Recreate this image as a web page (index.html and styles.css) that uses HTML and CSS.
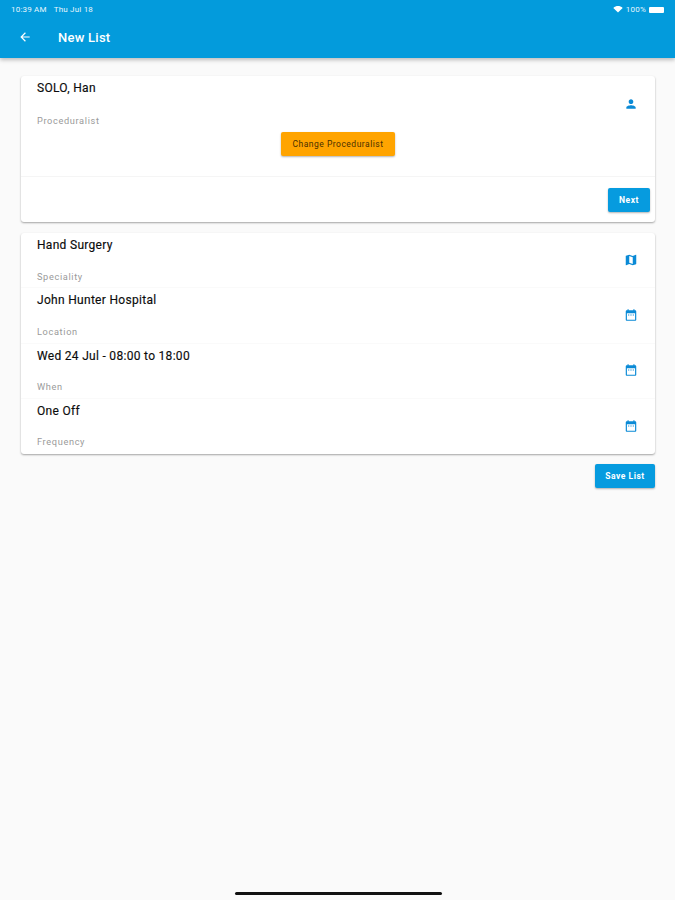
FILE: index.html
```html
<!DOCTYPE html>
<html lang="en">
<head>
    <meta charset="UTF-8">
    <title>New List</title>
    <link rel="stylesheet" href="styles.css">
</head>
<body>
    <header class="app-bar">
        <div class="status-bar">
            <span class="status-left"><span>10:39 AM</span><span>Thu Jul 18</span></span>
            <span class="status-right">
                <svg class="wifi" viewBox="0 0 24 18"><path d="M12 17 0 5c7-6.500 17-6.500 24 0z"/></svg>
                <span>100%</span>
                <span class="battery"></span>
            </span>
        </div>
        <div class="toolbar">
            <svg class="back" viewBox="0 0 24 24"><path d="M20 11H7.800l5.600-5.600L12 4l-8 8 8 8 1.400-1.400L7.800 13H20z"/></svg>
            <span class="toolbar-title">New List</span>
        </div>
    </header>

    <main class="content">
        <section class="card">
            <div class="row row-first">
                <div class="row-text">
                    <div class="value">SOLO, Han</div>
                    <div class="label label-first">Proceduralist</div>
                </div>
                <svg class="icon" viewBox="0 0 24 24"><path d="M12 12c2.200 0 4-1.800 4-4s-1.800-4-4-4-4 1.800-4 4 1.800 4 4 4zm0 2c-2.700 0-8 1.300-8 4v2h16v-2c0-2.700-5.300-4-8-4z"/></svg>
            </div>
            <div class="change-wrap">
                <button class="btn btn-orange">Change Proceduralist</button>
            </div>
            <div class="card-actions">
                <button class="btn btn-blue btn-next">Next</button>
            </div>
        </section>

        <section class="card">
            <div class="row">
                <div class="row-text">
                    <div class="value">Hand Surgery</div>
                    <div class="label">Speciality</div>
                </div>
                <svg class="icon" viewBox="0 0 24 24"><path d="M20.500 3l-.2.040L15 5.100 9 3 3.400 4.900c-.2.100-.4.300-.4.500V20.500c0 .3.200.5.500.5l.2-.040L9 18.900l6 2.100 5.600-1.900c.2-.1.400-.3.400-.5V3.500c0-.3-.2-.5-.5-.5zM15 19l-6-2.100V5l6 2.100z"/></svg>
            </div>
            <div class="row">
                <div class="row-text">
                    <div class="value">John Hunter Hospital</div>
                    <div class="label">Location</div>
                </div>
                <svg class="icon" viewBox="0 0 24 24"><path d="M9 11H7v2h2zm4 0h-2v2h2zm4 0h-2v2h2zm2-7h-1V2h-2v2H8V2H6v2H5c-1.100 0-2 .9-2 2v14c0 1.100.9 2 2 2h14c1.100 0 2-.9 2-2V6c0-1.100-.9-2-2-2zm0 16H5V9h14z"/></svg>
            </div>
            <div class="row">
                <div class="row-text">
                    <div class="value">Wed 24 Jul - 08:00 to 18:00</div>
                    <div class="label">When</div>
                </div>
                <svg class="icon" viewBox="0 0 24 24"><path d="M9 11H7v2h2zm4 0h-2v2h2zm4 0h-2v2h2zm2-7h-1V2h-2v2H8V2H6v2H5c-1.100 0-2 .9-2 2v14c0 1.100.9 2 2 2h14c1.100 0 2-.9 2-2V6c0-1.100-.9-2-2-2zm0 16H5V9h14z"/></svg>
            </div>
            <div class="row">
                <div class="row-text">
                    <div class="value">One Off</div>
                    <div class="label">Frequency</div>
                </div>
                <svg class="icon" viewBox="0 0 24 24"><path d="M9 11H7v2h2zm4 0h-2v2h2zm4 0h-2v2h2zm2-7h-1V2h-2v2H8V2H6v2H5c-1.100 0-2 .9-2 2v14c0 1.100.9 2 2 2h14c1.100 0 2-.9 2-2V6c0-1.100-.9-2-2-2zm0 16H5V9h14z"/></svg>
            </div>
        </section>

        <div class="save-wrap">
            <button class="btn btn-blue btn-save">Save List</button>
        </div>
    </main>

    <div class="home-indicator"></div>
</body>
</html>
```

FILE: styles.css
```css
* {
    box-sizing: border-box;
    margin: 0;
    padding: 0;
}

body {
    font-family: Roboto, "Liberation Sans", sans-serif;
    width: 675px;
    height: 900px;
    overflow: hidden;
    position: relative;
    background-color: #fafafa;
    color: #111;
}

.app-bar {
    height: 58px;
    background-color: #039bdc;
    color: #fff;
    box-shadow: 0 2px 4px rgba(0, 0, 0, 0.25);
}

.status-bar {
    height: 16px;
    padding: 3px 11px 0 11px;
    display: flex;
    justify-content: space-between;
    align-items: center;
    font-size: 8px;
    letter-spacing: 0.2px;
    color: #e8f6fd;
}

.status-left {
    display: flex;
    gap: 7px;
}

.status-right {
    display: flex;
    align-items: center;
    gap: 3px;
}

.wifi {
    width: 10px;
    height: 7px;
    fill: #fff;
}

.battery {
    width: 15px;
    height: 6px;
    background-color: #fff;
    border-radius: 1px;
}

.toolbar {
    height: 42px;
    display: flex;
    align-items: center;
    padding-left: 18px;
}

.back {
    width: 14px;
    height: 14px;
    fill: #fff;
}

.toolbar-title {
    margin-left: 26px;
    font-size: 13px;
    font-weight: 500;
    letter-spacing: 0.25px;
}

.content {
    padding: 18px 20px 0 21px;
}

.card {
    background-color: #fff;
    border-radius: 3px;
    box-shadow: 0 1px 2px rgba(0, 0, 0, 0.35);
    margin-bottom: 11px;
}

.row {
    height: 55.300px;
    display: flex;
    justify-content: space-between;
    align-items: center;
    padding: 0 17px 0 16px;
    border-bottom: 1px solid #fafafa;
}

.row:last-child {
    border-bottom: 0;
}

.row-first {
    height: 56px;
    border-bottom: 0;
}

.row-text {
    align-self: flex-start;
    padding-top: 6px;
}

.value {
    font-size: 12px;
    line-height: 13px;
    letter-spacing: 0.3px;
    color: #0c0c0c;
    -webkit-text-stroke: 0.15px #0c0c0c;
}

.label {
    margin-top: 18.500px;
    font-size: 9.200px;
    line-height: 11px;
    letter-spacing: 0.65px;
    color: #9a9a9a;
}

.label-first {
    margin-top: 19.500px;
}

.icon {
    width: 14px;
    height: 14px;
    fill: #0a8ad6;
    margin-top: -1px;
}

.change-wrap {
    height: 45px;
    display: flex;
    justify-content: center;
    border-bottom: 1px solid #f5f5f5;
}

.btn {
    border: 0;
    border-radius: 2px;
    font-family: inherit;
    font-size: 8.500px;
    height: 24px;
    letter-spacing: 0.5px;
    box-shadow: 0 1px 2px rgba(0, 0, 0, 0.3);
}

.btn-orange {
    width: 114px;
    background-color: #ffa400;
    color: #4a3000;
}

.btn-blue {
    background-color: #069bdf;
    color: #fff;
    font-weight: 700;
}

.card-actions {
    height: 45px;
    display: flex;
    justify-content: flex-end;
    padding: 11px 5px 0 0;
}

.btn-next {
    width: 42px;
}

.save-wrap {
    display: flex;
    justify-content: flex-end;
    margin-top: -1px;
}

.btn-save {
    width: 60px;
}

.home-indicator {
    position: absolute;
    left: 235px;
    top: 892px;
    width: 207px;
    height: 3px;
    border-radius: 2px;
    background-color: #111;
}
```
